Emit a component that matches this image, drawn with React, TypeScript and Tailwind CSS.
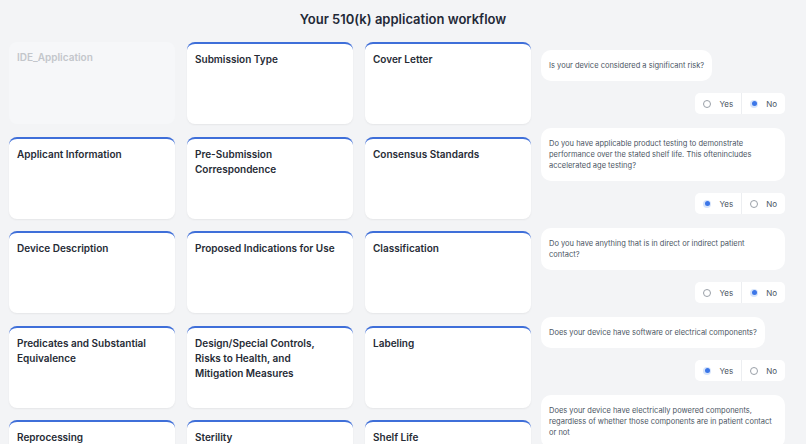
const cards = [
  { title: 'IDE_Application', disabled: true },
  { title: 'Submission Type' },
  { title: 'Cover Letter' },
  { title: 'Applicant Information' },
  { title: 'Pre-Submission Correspondence' },
  { title: 'Consensus Standards' },
  { title: 'Device Description' },
  { title: 'Proposed Indications for Use' },
  { title: 'Classification' },
  { title: 'Predicates and Substantial Equivalence' },
  { title: 'Design/Special Controls, Risks to Health, and Mitigation Measures' },
  { title: 'Labeling' },
  { title: 'Reprocessing' },
  { title: 'Sterility' },
  { title: 'Shelf Life' },
];

const questions: { text: string; answer?: 'yes' | 'no' }[] = [
  { text: 'Is your device considered a significant risk?', answer: 'no' },
  {
    text: 'Do you have applicable product testing to demonstrate performance over the stated shelf life. This oftenincludes accelerated age testing?',
    answer: 'yes',
  },
  { text: 'Do you have anything that is in direct or indirect patient contact?', answer: 'no' },
  { text: 'Does your device have software or electrical components?', answer: 'yes' },
  {
    text: 'Does your device have electrically powered components, regardless of whether those components are in patient contact or not',
  },
];

function Radio({ checked, label }: { checked: boolean; label: string }) {
  return (
    <div className="flex items-center gap-[8px] px-[8px]">
      {checked ? (
        <span className="w-[8px] h-[8px] rounded-full bg-[#d6e4fb] flex items-center justify-center">
          <span className="w-[5px] h-[5px] rounded-full bg-[#3b76e8]" />
        </span>
      ) : (
        <span className="w-[8px] h-[8px] rounded-full border border-[#9aa0a8]" />
      )}
      <span className="text-[8px] text-[#4b5563]">{label}</span>
    </div>
  );
}

export default function App() {
  return (
    <div
      className="min-h-screen bg-[#f3f4f6] pb-8"
      style={{ fontFamily: 'Inter, "Noto Sans", sans-serif' }}
    >
      <h1 className="text-center text-[13px] font-semibold text-[#1f2937] pt-[9px] leading-[20px]">
        Your 510(k) application workflow
      </h1>
      <div className="flex items-start px-[9px] mt-[13px]">
        <div className="grid grid-cols-3 gap-x-[12px] gap-y-[12.5px] w-[522px] shrink-0">
          {cards.map((c) =>
            c.disabled ? (
              <div key={c.title} className="h-[82px] rounded-lg bg-[#f6f7f9] px-[8px] pt-[8px]">
                <div className="text-[10px] font-semibold leading-[15px] text-[#c3c6cb]">{c.title}</div>
              </div>
            ) : (
              <div
                key={c.title}
                className="h-[82px] rounded-lg bg-white border-t-[2px] border-[#3f6fd9] shadow-[0_1px_2px_rgba(0,0,0,0.06)] px-[8px] pt-[8px]"
              >
                <div className="text-[10px] font-semibold leading-[15px] text-[#262b35] pr-2">{c.title}</div>
              </div>
            ),
          )}
        </div>
        <div className="ml-[10px] w-[244px] shrink-0 flex flex-col pt-[8px]">
          {questions.map((q, i) => (
            <div key={i} className={i > 0 ? 'mt-[14px]' : ''}>
              <div className="w-fit max-w-[244px] bg-white rounded-[10px] px-[8px] py-[10px] text-[7.5px] leading-[11px] text-[#4b5563]">
                {q.text}
              </div>
              {q.answer && (
                <div className="flex justify-end mt-[12px]">
                  <div className="flex bg-white rounded-[5px] h-[21px] items-stretch">
                    <Radio checked={q.answer === 'yes'} label="Yes" />
                    <div className="w-px bg-[#eceef1]" />
                    <Radio checked={q.answer === 'no'} label="No" />
                  </div>
                </div>
              )}
            </div>
          ))}
        </div>
      </div>
    </div>
  );
}
